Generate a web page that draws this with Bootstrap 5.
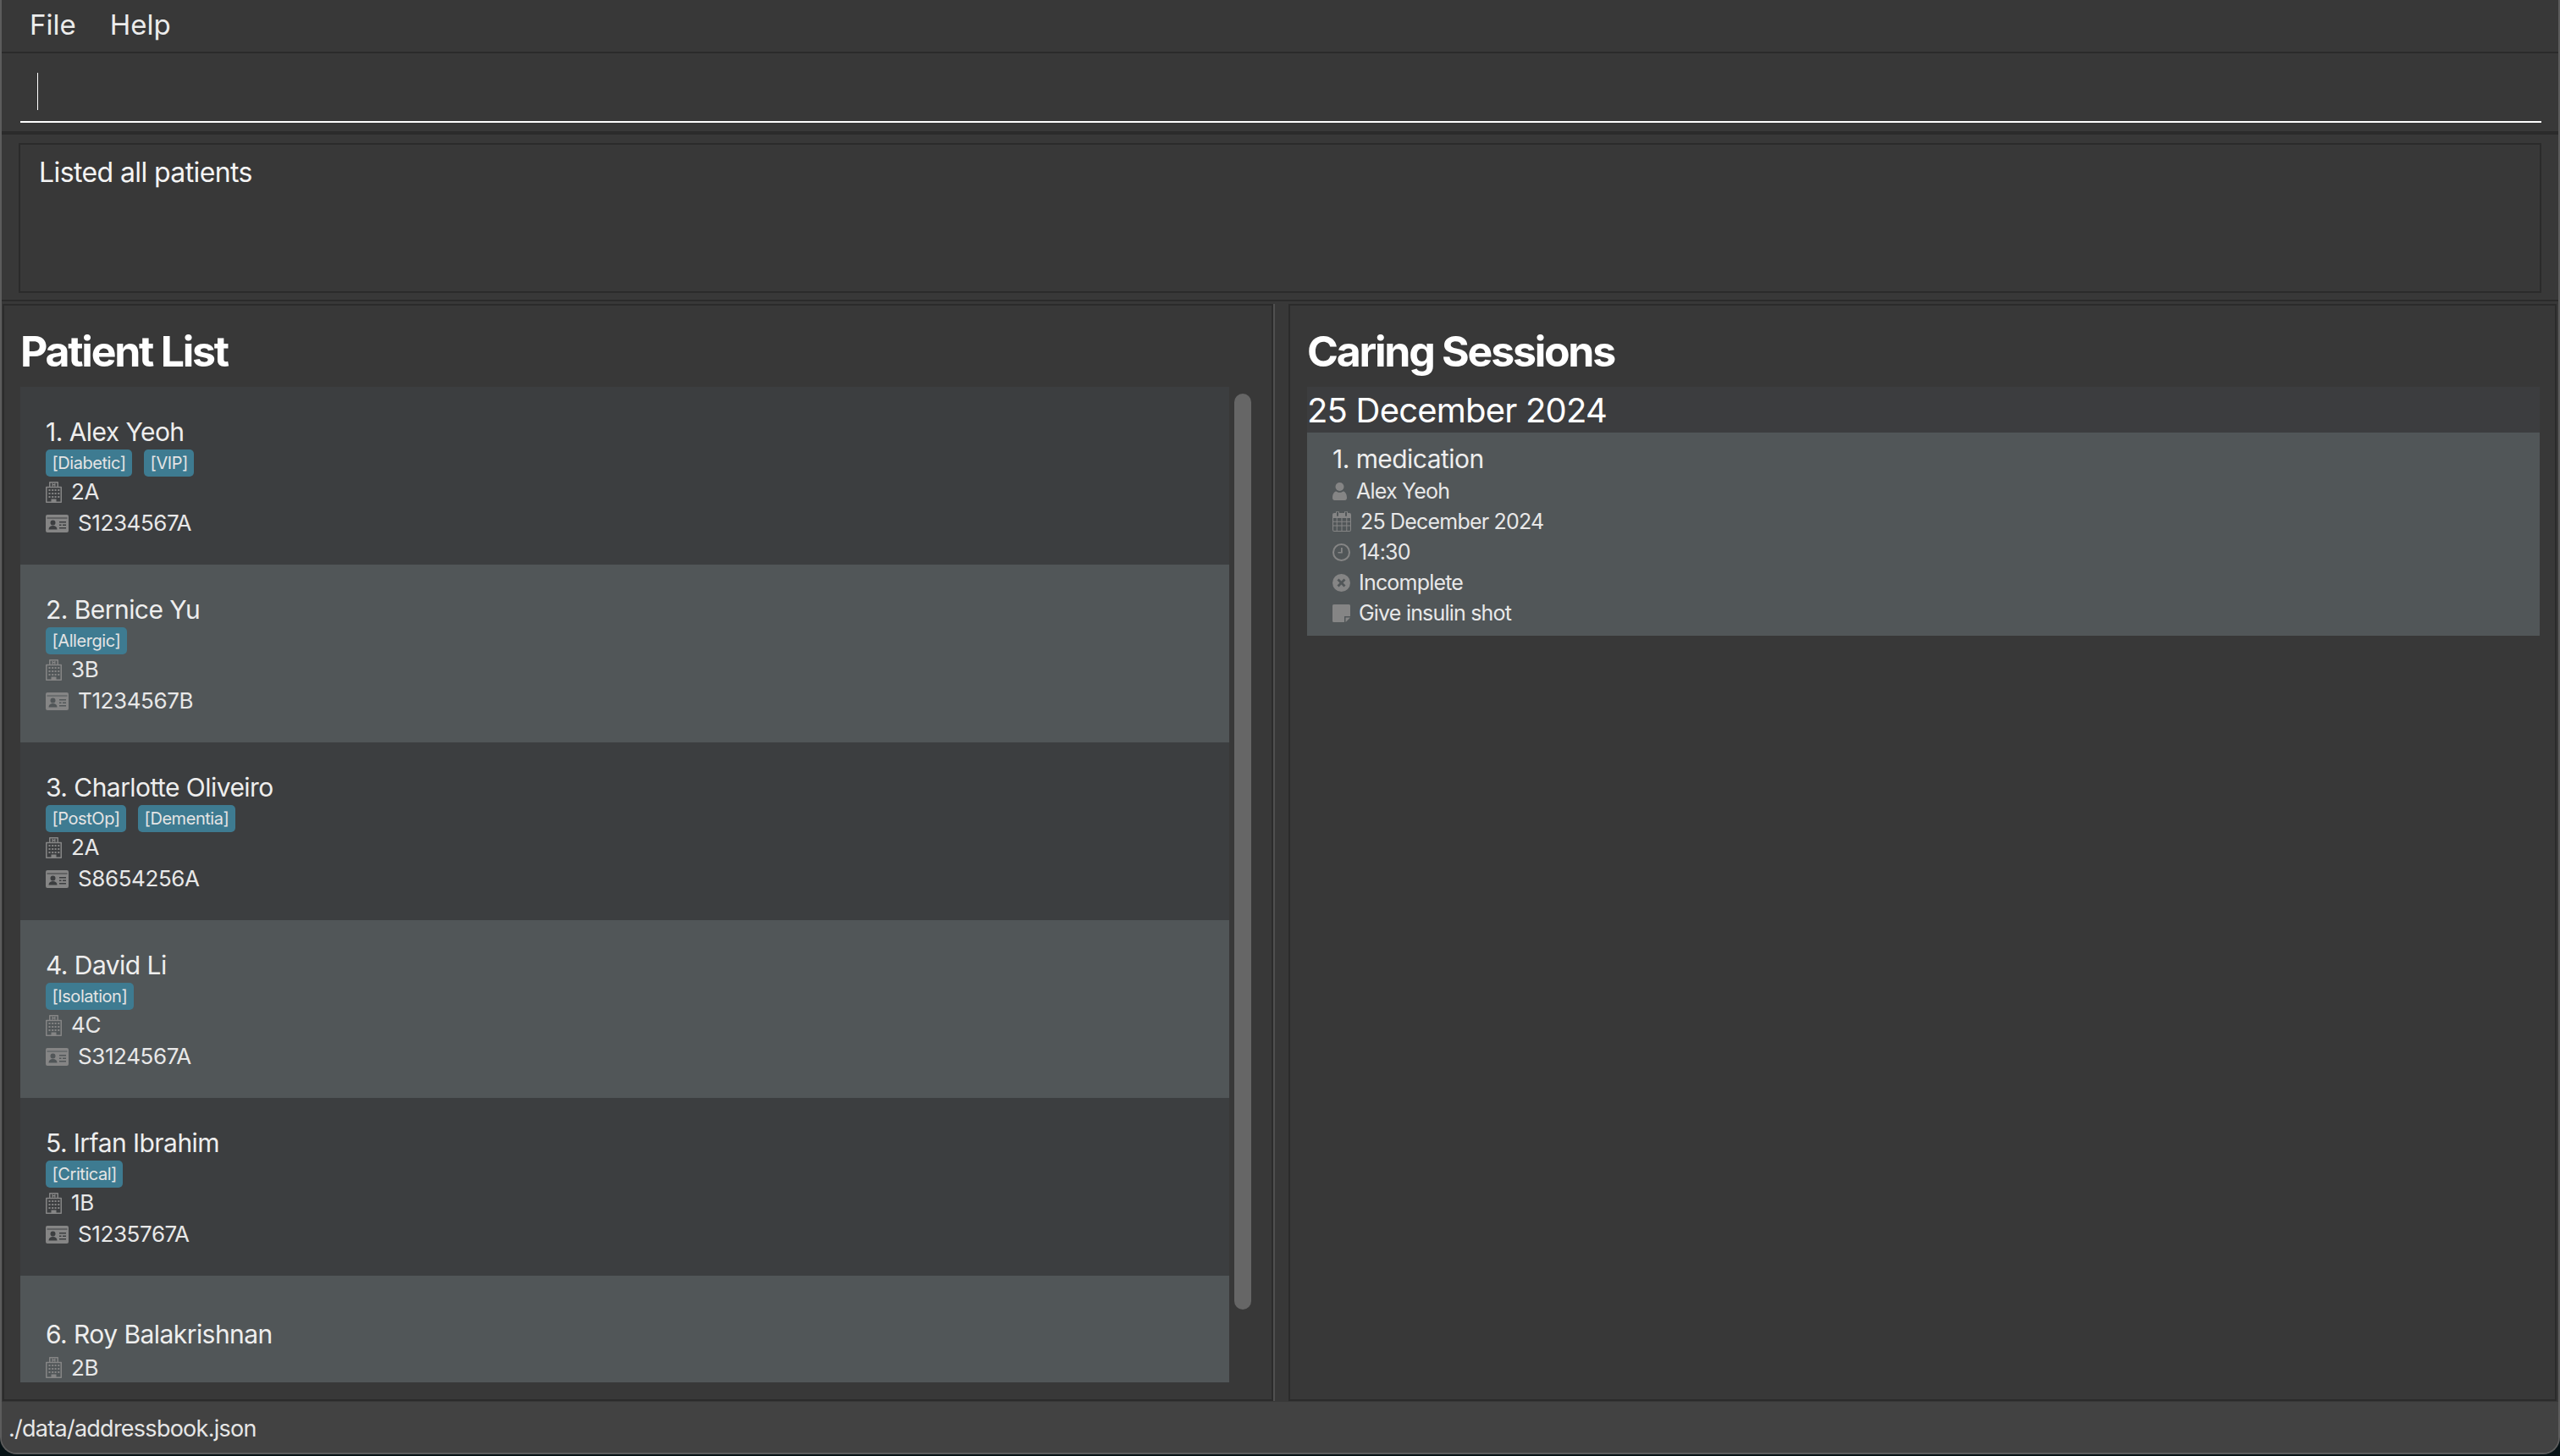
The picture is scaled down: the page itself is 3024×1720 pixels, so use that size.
<!DOCTYPE html>
<html lang="en">
<head>
<meta charset="utf-8">
<title>Patient List</title>
<link href="https://cdn.jsdelivr.net/npm/bootstrap@5.3.0/dist/css/bootstrap.min.css" rel="stylesheet">
<style>
html,body{height:1720px;margin:0;background:#071215;overflow:hidden}
body{font-family:Inter,"Liberation Sans",sans-serif;color:#fff}
.app-shell{height:1718px;background:#383838;border:solid #5c5c5c;border-width:0 2px 2px 2px;border-radius:0 0 20px 20px;overflow:hidden}
.menu-strip{height:59px;flex:none;padding-left:33px;gap:40px;font-size:33px;color:#ececec;margin-bottom:2px}
.cmd-zone{height:98px;flex:none;border-top:2px solid #2b2b2b;border-bottom:4px solid #2b2b2b;padding:0 20px 0 22px}
.cmd-field{height:60px;margin-top:22px;border-bottom:2px solid #fff;padding-left:20px}
.cmd-caret{display:block;width:1px;height:44px;background:#fff;position:relative;top:1px}
.msg-zone{height:197px;flex:none;padding:10px 20px 10px 20px;border-bottom:2px solid #2b2b2b}
.msg-box{height:177px;border:2px solid #2b2b2b;padding:13px 22px;font-size:32px;line-height:40px;color:#f4f4f4;letter-spacing:-.6px}
.panes{flex:1 1 auto;min-height:0;margin-top:3px}
.pane-left{width:1501px;flex:none;margin-left:1px;border:2px solid #2b2b2b;padding:0 19px}
.pane-gap{width:18px;flex:none;border-left:2px solid #505050}
.pane-right{flex:1 1 auto;border:2px solid #2b2b2b;padding:0 18px 0 20px;margin-right:2px}
.pane-title{height:96px;font-size:50px;font-weight:700;line-height:1;letter-spacing:-2.25px;margin:0;padding-top:29px}
.roll{height:1176px;width:1428px;overflow:hidden}
.roll-wrap{position:relative}
.roll-thumb{position:absolute;left:1434px;top:8px;width:20px;height:1082px;border-radius:10px;background:#666}
.entry{height:210px;flex:none;padding:4px 0 0 30px}
.entry-a{background:#3c3e40}
.entry-b{background:#515658}
.who{font-size:30px;line-height:38px;color:#eee;letter-spacing:-.55px}
.entry-plain .who{margin-bottom:3px}
.id-blank{height:38px}
.tags{gap:14px;margin-top:2px;height:32px}
.tagpill{font-size:20px;line-height:32px;height:32px;padding:0 7.500px;border-radius:5px;background:#3e7b91;color:#e4e4e4;letter-spacing:-.45px}
.info{font-size:26px;line-height:36px;color:#e8e8e8;letter-spacing:-.4px}
.info svg{flex:none;fill:#858585;margin-right:11px}
.id-row{line-height:38px}
.day-head{height:54px;background:#3c3d3f;font-size:40px;line-height:56px;color:#fff;letter-spacing:-.8px;overflow:hidden}
.sess{height:240px;background:#515658;padding:11px 0 0 30px}
.sess .who{line-height:40px}
.sess .info{font-size:25px;letter-spacing:-.8px}
.sess .tight-icon svg{margin-right:10px}
.status-strip{height:60px;flex:none;background:#424242;padding:4px 0 0 8px;font-size:27px;color:#e6e6e6;letter-spacing:-.74px;margin-top:1px}
</style>
</head>
<body>
<svg width="0" height="0" class="d-none">
<defs>
<symbol id="i-hosp" viewBox="0 0 19 25"><path fill="none" stroke="#858585" stroke-width="1.500" stroke-linejoin="round" d="M4.750 6.500V.750h9.500V6.500M.750 6.500h17.500v17.750H.750z"/><path d="M7.500 1.800h1.300v1.300h1.400V1.800h1.300v4h-1.300V4.300H8.800v1.500H7.500zM3.500 9h2v2h-2zm3.700 0h2v2h-2zm3.400 0h2v2h-2zm3.700 0h2v2h-2zM3.500 13h2v2h-2zm3.700 0h2v2h-2zm3.400 0h2v2h-2zm3.700 0h2v2h-2zM3.500 17h2v2h-2zm3.700 0h2v2h-2zm3.400 0h2v2h-2zm3.700 0h2v2h-2zM6.500 20.500h6V25h-6z"/></symbol>
<symbol id="i-card" viewBox="0 0 27 21"><path fill-rule="evenodd" d="M2 0h23a2 2 0 0 1 2 2v17a2 2 0 0 1-2 2H2a2 2 0 0 1-2-2V2a2 2 0 0 1 2-2zM1.500 3.500v1h24v-1zM8.500 6.500a3 3 0 1 0 0 6 3 3 0 0 0 0-6zM3.500 17.500h10c0-3-2-4.500-5-4.500s-5 1.500-5 4.500zM16 8v1.600h8V8zm0 3.500v1.600h2.500v-1.600zm4 0v1.600h4v-1.600zM16 15v1.600h8V15z"/></symbol>
<symbol id="i-user" viewBox="0 0 17 21"><circle cx="8.500" cy="5" r="5"/><path d="M0 18c0-5 2.500-7.500 4.500-7.500 1 .8 2.500 1.300 4 1.300s3-.5 4-1.300c2 0 4.500 2.500 4.500 7.500 0 2-1 3-2.500 3h-12C1 21 0 20 0 18z"/></symbol>
<symbol id="i-cal" viewBox="0 0 22 24"><path fill-rule="evenodd" d="M2 2h2V1.500a2 2 0 0 1 4 0V2h6v-.5a2 2 0 0 1 4 0V2h2a2 2 0 0 1 2 2v18a2 2 0 0 1-2 2H2a2 2 0 0 1-2-2V4a2 2 0 0 1 2-2zM5 1.500V5a1 1 0 0 0 2 0V1.500a1 1 0 0 0-2 0zm10 0V5a1 1 0 0 0 2 0V1.500a1 1 0 0 0-2 0zM1 8v3.700h3.700V8zm4.700 0v3.700h4.800V8zm5.800 0v3.700h4.800V8zm5.800 0v3.700H21V8zM1 12.700v3.800h3.700v-3.800zm4.700 0v3.800h4.800v-3.800zm5.800 0v3.800h4.800v-3.800zm5.800 0v3.800H21v-3.800zM1 17.500V22a1 1 0 0 0 1 1h2.700v-5.500zm4.700 0V23h4.800v-5.500zm5.800 0V23h4.800v-5.500zm5.800 0V23H20a1 1 0 0 0 1-1v-4.500z"/></symbol>
<symbol id="i-clock" viewBox="0 0 21 21"><path fill-rule="evenodd" d="M10.500 0a10.500 10.500 0 1 1 0 21 10.500 10.500 0 0 1 0-21zm0 2a8.500 8.500 0 1 0 0 17 8.500 8.500 0 0 0 0-17zM10 5h1.800v6.500H6.500V10H10z"/></symbol>
<symbol id="i-x" viewBox="0 0 21 21"><path fill-rule="evenodd" d="M10.500 0a10.500 10.500 0 1 1 0 21 10.500 10.500 0 0 1 0-21zM7.500 5.500l-2 2 3 3-3 3 2 2 3-3 3 3 2-2-3-3 3-3-2-2-3 3z"/></symbol>
<symbol id="i-note" viewBox="0 0 21 21"><path fill-rule="evenodd" d="M1.500 0h18A1.500 1.500 0 0 1 21 1.500V14h-7v7H1.500A1.500 1.500 0 0 1 0 19.500v-18A1.500 1.500 0 0 1 1.500 0zM15.500 15.500H21L15.500 21z"/></symbol>
</defs>
</svg>
<div class="app-shell d-flex flex-column">
  <div class="menu-strip d-flex align-items-center"><span>File</span><span>Help</span></div>
  <div class="cmd-zone"><div class="cmd-field"><span class="cmd-caret"></span></div></div>
  <div class="msg-zone"><div class="msg-box">Listed all patients</div></div>
  <div class="panes d-flex">
    <div class="pane-left">
      <h2 class="pane-title">Patient List</h2>
      <div class="roll-wrap">
        <div class="roll d-flex flex-column">
          <div class="entry entry-a d-flex flex-column justify-content-center">
            <div class="who">1. Alex Yeoh</div>
            <div class="tags d-flex"><span class="tagpill">[Diabetic]</span><span class="tagpill">[VIP]</span></div>
            <div class="info d-flex align-items-center"><svg width="19" height="25"><use href="#i-hosp"/></svg>2A</div>
            <div class="info id-row d-flex align-items-center"><svg width="27" height="21"><use href="#i-card"/></svg>S1234567A</div>
          </div>
          <div class="entry entry-b d-flex flex-column justify-content-center">
            <div class="who">2. Bernice Yu</div>
            <div class="tags d-flex"><span class="tagpill">[Allergic]</span></div>
            <div class="info d-flex align-items-center"><svg width="19" height="25"><use href="#i-hosp"/></svg>3B</div>
            <div class="info id-row d-flex align-items-center"><svg width="27" height="21"><use href="#i-card"/></svg>T1234567B</div>
          </div>
          <div class="entry entry-a d-flex flex-column justify-content-center">
            <div class="who">3. Charlotte Oliveiro</div>
            <div class="tags d-flex"><span class="tagpill">[PostOp]</span><span class="tagpill">[Dementia]</span></div>
            <div class="info d-flex align-items-center"><svg width="19" height="25"><use href="#i-hosp"/></svg>2A</div>
            <div class="info id-row d-flex align-items-center"><svg width="27" height="21"><use href="#i-card"/></svg>S8654256A</div>
          </div>
          <div class="entry entry-b d-flex flex-column justify-content-center">
            <div class="who">4. David Li</div>
            <div class="tags d-flex"><span class="tagpill">[Isolation]</span></div>
            <div class="info d-flex align-items-center"><svg width="19" height="25"><use href="#i-hosp"/></svg>4C</div>
            <div class="info id-row d-flex align-items-center"><svg width="27" height="21"><use href="#i-card"/></svg>S3124567A</div>
          </div>
          <div class="entry entry-a d-flex flex-column justify-content-center">
            <div class="who">5. Irfan Ibrahim</div>
            <div class="tags d-flex"><span class="tagpill">[Critical]</span></div>
            <div class="info d-flex align-items-center"><svg width="19" height="25"><use href="#i-hosp"/></svg>1B</div>
            <div class="info id-row d-flex align-items-center"><svg width="27" height="21"><use href="#i-card"/></svg>S1235767A</div>
          </div>
          <div class="entry entry-b entry-plain d-flex flex-column justify-content-center">
            <div class="who">6. Roy Balakrishnan</div>
            <div class="info d-flex align-items-center"><svg width="19" height="25"><use href="#i-hosp"/></svg>2B</div>
            <div class="id-blank"></div>
          </div>
        </div>
        <div class="roll-thumb"></div>
      </div>
    </div>
    <div class="pane-gap"></div>
    <div class="pane-right">
      <h2 class="pane-title">Caring Sessions</h2>
      <div class="day-head">25 December 2024</div>
      <div class="sess">
        <div class="who">1. medication</div>
        <div class="info d-flex align-items-center"><svg width="17" height="21"><use href="#i-user"/></svg>Alex Yeoh</div>
        <div class="info d-flex align-items-center"><svg width="22" height="24"><use href="#i-cal"/></svg>25 December 2024</div>
        <div class="info tight-icon d-flex align-items-center"><svg width="21" height="21"><use href="#i-clock"/></svg>14:30</div>
        <div class="info tight-icon d-flex align-items-center"><svg width="21" height="21"><use href="#i-x"/></svg>Incomplete</div>
        <div class="info tight-icon d-flex align-items-center"><svg width="21" height="21"><use href="#i-note"/></svg>Give insulin shot</div>
      </div>
    </div>
  </div>
  <div class="status-strip d-flex align-items-center">./data/addressbook.json</div>
</div>
<script src="https://cdn.jsdelivr.net/npm/bootstrap@5.3.0/dist/js/bootstrap.bundle.min.js"></script>
</body>
</html>
